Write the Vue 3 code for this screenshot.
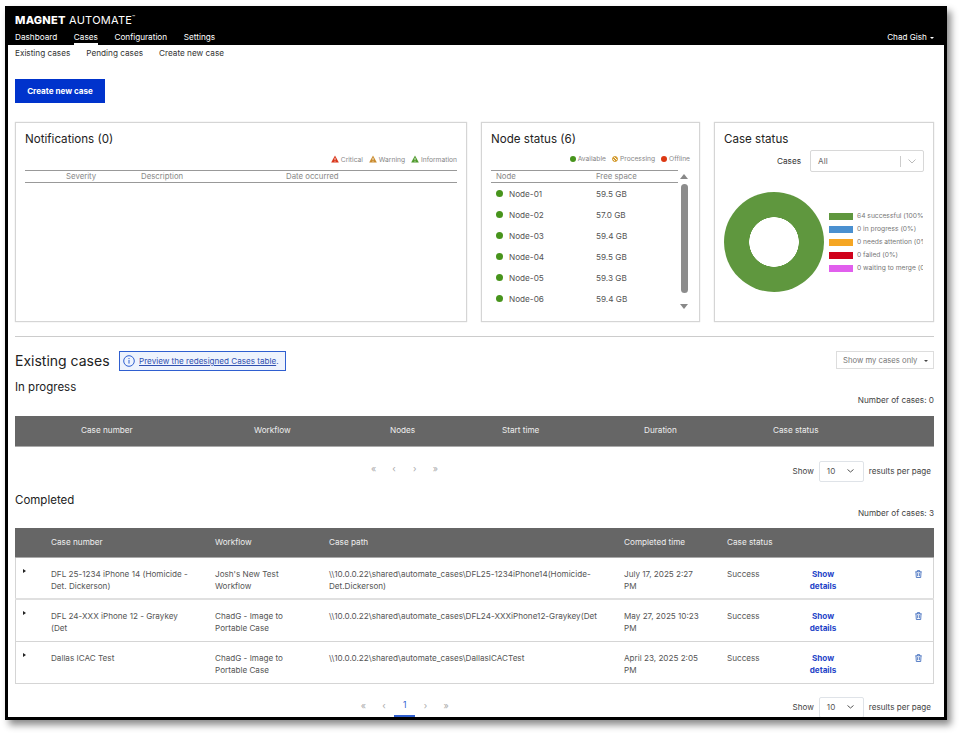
<script setup>
const navItems = ["Dashboard", "Cases", "Configuration", "Settings"];
const subItems = ["Existing cases", "Pending cases", "Create new case"];

const nodes = [
  { name: "Node-01", free: "59.5 GB" },
  { name: "Node-02", free: "57.0 GB" },
  { name: "Node-03", free: "59.4 GB" },
  { name: "Node-04", free: "59.5 GB" },
  { name: "Node-05", free: "59.3 GB" },
  { name: "Node-06", free: "59.4 GB" },
];

const severities = [
  { label: "Critical", color: "#d9361a" },
  { label: "Warning", color: "#c98a2b" },
  { label: "Information", color: "#4f9a2c" },
];

const legend = [
  { label: "64 successful (100%)", color: "#5f973e" },
  { label: "0 in progress (0%)", color: "#4a90d0" },
  { label: "0 needs attention (0%)", color: "#f5a623" },
  { label: "0 failed (0%)", color: "#d0021b" },
  { label: "0 waiting to merge (0%)", color: "#e15fed" },
];

const progressCols = ["Case number", "Workflow", "Nodes", "Start time", "Duration", "Case status"];

const cases = [
  {
    number: "DFL 25-1234 iPhone 14 (Homicide - Det. Dickerson)",
    workflow: "Josh's New Test Workflow",
    path: "\\\\10.0.0.22\\shared\\automate_cases\\DFL25-1234iPhone14(Homicide-Det.Dickerson)",
    time: "July 17, 2025 2:27 PM",
  },
  {
    number: "DFL 24-XXX iPhone 12 - Graykey (Det",
    workflow: "ChadG - Image to Portable Case",
    path: "\\\\10.0.0.22\\shared\\automate_cases\\DFL24-XXXiPhone12-Graykey(Det",
    time: "May 27, 2025 10:23 PM",
  },
  {
    number: "Dallas ICAC Test",
    workflow: "ChadG - Image to Portable Case",
    path: "\\\\10.0.0.22\\shared\\automate_cases\\DallasICACTest",
    time: "April 23, 2025 2:05 PM",
  },
];
</script>

<template>
  <div class="page">
    <div class="frame">
      <header class="topbar">
        <div class="brand"><b>MAGNET</b> AUTOMATE<sup>™</sup></div>
        <div class="topnav">
          <nav class="nav">
            <a v-for="item in navItems" :key="item" :class="{ active: item === 'Cases' }">{{ item }}</a>
          </nav>
          <div class="user">Chad Gish <i class="caret"></i></div>
        </div>
      </header>

      <main class="content">
        <div class="subnav">
          <a v-for="item in subItems" :key="item">{{ item }}</a>
        </div>

        <button class="primary">Create new case</button>

        <section class="cards">
          <div class="card notifications">
            <h2>Notifications (0)</h2>
            <div class="legend-row">
              <span v-for="s in severities" :key="s.label">
                <svg width="8" height="8" viewBox="0 0 10 10">
                  <path d="M5 .5 9.8 9.5H.2Z" :fill="s.color" />
                  <path d="M5 3.5v3M5 7.4v1" stroke="#fff" stroke-width="1" />
                </svg>
                {{ s.label }}
              </span>
            </div>
            <div class="notif-head">
              <span>Severity</span>
              <span>Description</span>
              <span>Date occurred</span>
            </div>
          </div>

          <div class="card nodes">
            <h2>Node status (6)</h2>
            <div class="legend-row">
              <span><i class="dot small green"></i>Available</span>
              <span><i class="dot small hatch"></i>Processing</span>
              <span><i class="dot small red"></i>Offline</span>
            </div>
            <div class="node-body">
              <div class="node-table">
                <div class="node-head">
                  <span>Node</span>
                  <span>Free space</span>
                </div>
                <div v-for="n in nodes" :key="n.name" class="node-row">
                  <span class="node-name"><i class="dot green"></i>{{ n.name }}</span>
                  <span>{{ n.free }}</span>
                </div>
              </div>
              <div class="scrollbar">
                <i class="arrow up"></i>
                <i class="thumb"></i>
                <i class="arrow down"></i>
              </div>
            </div>
          </div>

          <div class="card status">
            <h2>Case status</h2>
            <div class="filter">
              <label>Cases</label>
              <div class="select">
                <span>All</span>
                <i class="sep"></i>
                <svg width="8" height="5" viewBox="0 0 8 5"><path d="M.5.5 4 4 7.5.5" fill="none" stroke="#bbb" /></svg>
              </div>
            </div>
            <div class="chart">
              <div class="donut"></div>
              <ul class="chart-legend">
                <li v-for="l in legend" :key="l.label">
                  <i :style="{ background: l.color }"></i>
                  <span>{{ l.label }}</span>
                </li>
              </ul>
            </div>
          </div>
        </section>

        <hr class="divider" />

        <div class="existing-head">
          <h2>Existing cases</h2>
          <div class="preview">
            <svg width="12" height="12" viewBox="0 0 12 12">
              <circle cx="6" cy="6" r="5.3" fill="none" stroke="#2f5fd0" />
              <path d="M6 5v3.6M6 3v1.1" stroke="#2f5fd0" />
            </svg>
            <span><a>Preview the redesigned Cases table</a>.</span>
          </div>
          <div class="mine">Show my cases only <i class="caret dark"></i></div>
        </div>

        <h3 class="in-progress">In progress</h3>
        <div class="count">Number of cases: 0</div>
        <div class="progress-head">
          <span v-for="c in progressCols" :key="c">{{ c }}</span>
        </div>

        <div class="pager-row first">
          <div class="pager">
            <span>«</span><span>‹</span><span>›</span><span>»</span>
          </div>
          <div class="per-page">
            Show
            <div class="size">10 <svg width="7" height="4" viewBox="0 0 7 4"><path d="M.5.5 3.5 3 6.5.5" fill="none" stroke="#555" /></svg></div>
            results per page
          </div>
        </div>

        <h3 class="completed">Completed</h3>
        <div class="count">Number of cases: 3</div>

        <div class="done-table">
          <div class="done-head">
            <span></span>
            <span>Case number</span>
            <span>Workflow</span>
            <span>Case path</span>
            <span>Completed time</span>
            <span>Case status</span>
          </div>
          <div v-for="c in cases" :key="c.number" class="done-row">
            <span class="expand"><i></i></span>
            <span class="number">{{ c.number }}</span>
            <span class="wrap">{{ c.workflow }}</span>
            <span class="path">{{ c.path }}</span>
            <span class="wrap">{{ c.time }}</span>
            <span>Success</span>
            <a class="details">Show details</a>
            <span class="trash">
              <svg width="7" height="8" viewBox="0 0 8 9" fill="none" stroke="#2f5fb8" stroke-width=".9">
                <path d="M.4 2h7.2M2.7 2V.6h2.6V2M1.1 2l.4 6.5h5l.4-6.5M3 3.5V7M5 3.5V7" />
              </svg>
            </span>
          </div>
        </div>

        <div class="pager-row last">
          <div class="pager numbered">
            <span>«</span><span>‹</span><span class="current">1</span><span>›</span><span>»</span>
          </div>
          <div class="per-page">
            Show
            <div class="size">10 <svg width="7" height="4" viewBox="0 0 7 4"><path d="M.5.5 3.5 3 6.5.5" fill="none" stroke="#555" /></svg></div>
            results per page
          </div>
        </div>
      </main>
    </div>
  </div>
</template>

<style>
html,
body {
  margin: 0;
  background: #fff;
}
</style>

<style scoped>
* {
  box-sizing: border-box;
}

.page {
  width: 964px;
  height: 736px;
  padding: 6px 0 0 5px;
  overflow: hidden;
  font-family: Inter, "Liberation Sans", sans-serif;
  color: #333;
}

.frame {
  width: 942px;
  height: 714px;
  border: 3px solid #000;
  border-top-width: 1px;
  background: #fff;
  overflow: hidden;
  box-shadow: 4px 5px 7px rgba(0, 0, 0, 0.45);
}

.topbar {
  height: 38px;
  padding: 6px 10px 0 7px;
  background: #000;
  color: #fff;
}

.brand {
  height: 14px;
  font-size: 11px;
  line-height: 14px;
  letter-spacing: 0.25px;
}

.brand b {
  font-weight: 800;
}

.brand sup {
  font-size: 5px;
  vertical-align: 5px;
  line-height: 0;
}

.topnav {
  display: flex;
  justify-content: space-between;
  margin-top: 4px;
}

.nav {
  display: flex;
  gap: 16.6px;
  font-size: 8.2px;
}

.nav a {
  height: 14px;
  line-height: 13px;
  border-bottom: 1px solid transparent;
}

.nav a.active {
  border-bottom: 2px solid #fff;
}

.user {
  font-size: 8.1px;
  line-height: 13px;
}

.caret {
  display: inline-block;
  margin-left: 1px;
  vertical-align: 1px;
  border: 2.5px solid transparent;
  border-top-color: #fff;
  border-bottom: 0;
}

.caret.dark {
  margin-left: 4px;
  border-top-color: #444;
}

.content {
  padding: 1px 10px 0 7px;
}

.subnav {
  display: flex;
  gap: 16px;
  height: 15px;
  font-size: 8.2px;
  line-height: 15px;
  color: #333;
}

.primary {
  display: block;
  width: 90px;
  height: 24px;
  margin: 18px 0 19px;
  padding: 0;
  border: 0;
  background: #0033cc;
  color: #fff;
  font: 700 8.1px Inter, sans-serif;
}

.cards {
  display: grid;
  grid-template-columns: 452px 219px 220px;
  gap: 14px;
  height: 200px;
}

.card {
  padding: 9px 9px 8px;
  border: 1px solid #d5d5d5;
  box-shadow: 0 0 1px #ccc;
}

.card h2 {
  margin: 0;
  font-size: 11.6px;
  font-weight: 400;
  line-height: 15px;
  color: #222;
}

.legend-row {
  display: flex;
  justify-content: flex-end;
  align-items: center;
  gap: 6px;
  height: 10px;
  margin-top: 7px;
  font-size: 6.7px;
  color: #888;
}

.legend-row svg {
  vertical-align: -1px;
}

.notif-head {
  display: grid;
  grid-template-columns: 75px 145px 1fr;
  height: 13px;
  margin-top: 6px;
  padding-left: 41px;
  border-top: 1px solid #999;
  border-bottom: 1px solid #999;
  font-size: 7.8px;
  line-height: 11px;
  color: #888;
}

.dot {
  display: inline-block;
  width: 7px;
  height: 7px;
  margin-right: 3px;
  border-radius: 50%;
}

.dot.small {
  width: 6px;
  height: 6px;
  margin-right: 2px;
  vertical-align: -0.5px;
}

.green {
  background: #47941c;
}

.red {
  background: #dc3812;
}

.hatch {
  background: repeating-linear-gradient(45deg, #d39a2d 0 1px, #fff 1px 2px);
  border: 1px solid #d39a2d;
}

.node-body {
  display: flex;
  margin-top: 6px;
}

.node-table {
  width: 187px;
  flex: none;
}

.node-head {
  display: grid;
  grid-template-columns: 100px 1fr;
  height: 13px;
  padding-left: 5px;
  border-top: 1px solid #999;
  border-bottom: 1px solid #999;
  font-size: 7.8px;
  line-height: 11px;
  color: #888;
}

.node-row {
  display: grid;
  grid-template-columns: 100px 1fr;
  align-items: center;
  height: 21px;
  padding-left: 5px;
  font-size: 8.2px;
  color: #555;
}

.node-name .dot {
  width: 7px;
  height: 7px;
  margin-right: 6px;
  vertical-align: -0.5px;
}

.scrollbar {
  display: flex;
  flex-direction: column;
  align-items: center;
  width: 12px;
  padding-top: 4px;
}

.thumb {
  width: 7px;
  height: 109px;
  margin-top: 5px;
  border-radius: 4px;
  background: #8c8c8c;
}

.arrow {
  width: 0;
  height: 0;
  border: 4px solid transparent;
}

.arrow.up {
  border-top: 0;
  border-bottom: 5px solid #888;
}

.arrow.down {
  margin-top: 11px;
  border-bottom: 0;
  border-top: 5px solid #888;
}

.filter {
  display: flex;
  align-items: center;
  justify-content: flex-end;
  gap: 9px;
  margin-top: 3px;
  font-size: 8.2px;
}

.select {
  display: flex;
  align-items: center;
  width: 114px;
  height: 22px;
  padding: 0 7px;
  border: 1px solid #d8d8d8;
  border-radius: 2px;
  color: #666;
}

.select span {
  flex: 1;
}

.sep {
  width: 1px;
  height: 11px;
  margin-right: 7px;
  background: #ccc;
}

.chart {
  display: flex;
  align-items: center;
  gap: 5px;
  height: 100px;
  margin-top: 20px;
}

.donut {
  flex: none;
  width: 100px;
  height: 100px;
  border-radius: 50%;
  background: radial-gradient(circle, #fff 0 24.5px, #5f973e 25px);
}

.chart-legend {
  width: 94px;
  margin: 0;
  padding: 0;
  overflow: hidden;
  list-style: none;
  font-size: 6.7px;
  color: #777;
}

.chart-legend li {
  display: flex;
  align-items: center;
  gap: 4px;
  height: 13px;
  white-space: nowrap;
}

.chart-legend i {
  flex: none;
  width: 24px;
  height: 7px;
}

.divider {
  height: 1px;
  margin: 14px 0 0;
  border: 0;
  background: #ccc;
}

.existing-head {
  display: flex;
  align-items: center;
  height: 20px;
  margin-top: 14px;
}

.existing-head h2 {
  width: 104px;
  margin: 0 0 2px;
  font-size: 14px;
  font-weight: 400;
  color: #222;
}

.preview {
  display: flex;
  align-items: center;
  gap: 4px;
  width: 167px;
  height: 20px;
  padding-left: 3px;
  border: 1px solid #2f5fd0;
  background: #eef3fd;
  font-size: 8.1px;
  color: #2f4fb0;
  white-space: nowrap;
}

.preview a {
  text-decoration: underline;
}

.mine {
  width: 98px;
  height: 18px;
  margin: -2px 0 0 auto;
  padding-left: 6px;
  border: 1px solid #ddd;
  font-size: 7.7px;
  line-height: 17px;
  color: #777;
  white-space: nowrap;
}

h3 {
  margin: 0;
  font-size: 11.5px;
  font-weight: 400;
  line-height: 15px;
  color: #222;
}

.in-progress {
  margin-top: 9px;
}

.count {
  height: 12px;
  margin-top: -1px;
  font-size: 8.2px;
  line-height: 12px;
  text-align: right;
  color: #444;
}

.progress-head {
  display: grid;
  grid-template-columns: 173px 136px 112px 142px 129px 1fr;
  align-items: center;
  height: 31px;
  margin-top: 10px;
  padding: 0 0 3px 66px;
  background: #666;
  border-bottom: 1px solid #aaa;
  font-size: 8.2px;
  color: #eee;
}

.pager-row {
  position: relative;
  display: flex;
  align-items: center;
  justify-content: flex-end;
  height: 22px;
  padding-right: 3px;
}

.pager-row.first {
  margin-top: 13px;
}

.pager-row.last {
  margin-top: 12px;
}

.pager {
  position: absolute;
  top: 0;
  left: 355px;
  display: flex;
  gap: 13.6px;
  height: 22px;
  font-size: 9px;
  line-height: 18px;
  color: #aaa;
}

.pager span {
  width: 7px;
  text-align: center;
}

.pager.numbered {
  left: 338px;
  gap: 0;
  line-height: 20px;
}

.pager.numbered span {
  width: 20.7px;
}

.pager .current {
  height: 21px;
  border-bottom: 2px solid #2f5fd0;
  color: #2f5fd0;
  line-height: 19px;
  font-size: 8.5px;
}

.per-page {
  display: flex;
  align-items: center;
  gap: 5px;
  font-size: 8.1px;
  color: #444;
}

.size {
  display: flex;
  align-items: center;
  justify-content: space-between;
  width: 45px;
  height: 21px;
  padding: 0 9px 0 7px;
  border: 1px solid #dfe3e8;
  border-radius: 2px;
  color: #555;
}

.completed {
  margin-top: 11px;
}

.done-table {
  margin-top: 9px;
}

.done-head,
.done-row {
  display: grid;
  grid-template-columns: 36px 164px 114px 295px 103px 76px 40px 1fr;
}

.done-head {
  align-items: center;
  height: 30px;
  padding-bottom: 2px;
  background: #666;
  border-bottom: 1px solid #aaa;
  font-size: 8.2px;
  color: #eee;
}

.done-row {
  height: 42px;
  padding-top: 11px;
  border-bottom: 1px solid #d5d5d5;
  box-shadow: inset 1px 0 #d5d5d5, inset -1px 0 #d5d5d5;
  font-size: 8.15px;
  line-height: 11.7px;
  color: #555;
}

.done-head + .done-row {
  border-bottom: 2px solid #e0e0e0;
}

.number {
  padding-right: 22px;
}

.wrap {
  padding-right: 24px;
}

.path {
  overflow-wrap: anywhere;
  padding-right: 8px;
}

.expand i {
  display: block;
  width: 0;
  margin: 0 0 0 8px;
  border: 2.5px solid transparent;
  border-left: 3px solid #222;
  border-right: 0;
}

.details {
  font-weight: 700;
  text-align: center;
  color: #1f45c8;
}

.trash {
  padding: 1px 0 0 72px;
}
</style>
